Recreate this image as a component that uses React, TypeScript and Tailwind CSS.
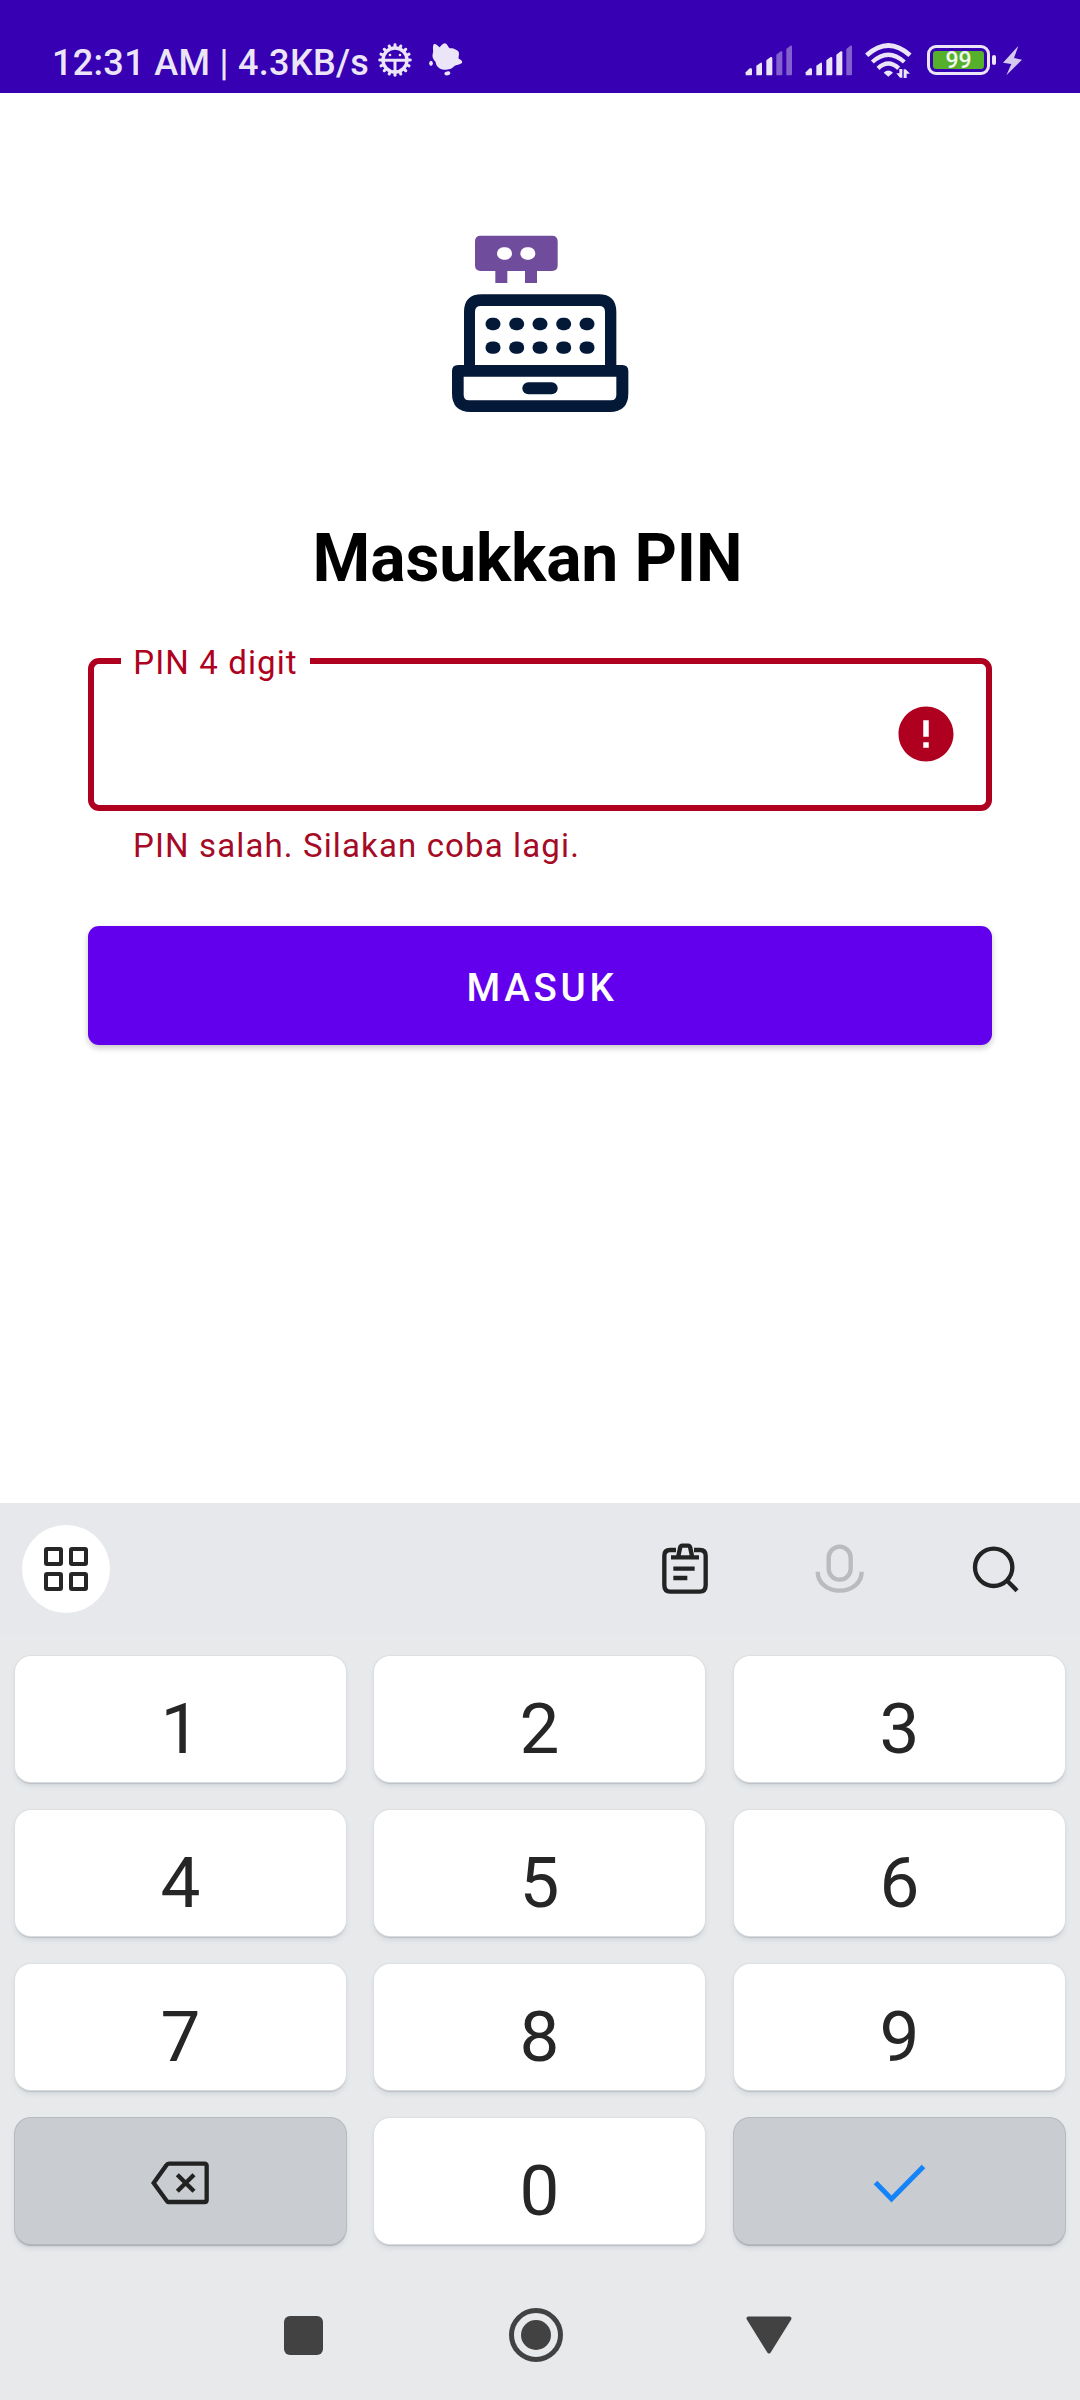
import type { ReactNode } from 'react';

function GearIcon() {
  const teeth = Array.from({ length: 16 }, (_, i) => i * 22.5);
  return (
    <svg className="block h-[36px] w-[36px] shrink-0" viewBox="-54 -54 108 108" fill="none">
      {teeth.map((a) => (
        <rect key={a} x="-4.5" y="-50" width="9" height="14" rx="4" fill="#ebe5f7" transform={`rotate(${a})`} />
      ))}
      <circle r="36" stroke="#ebe5f7" strokeWidth="10" />
      <path d="M-35 1H35M0 1V36" stroke="#ebe5f7" strokeWidth="9" />
      <circle cx="-15" cy="-15" r="4" fill="#ebe5f7" />
      <circle cx="15" cy="-15" r="4" fill="#ebe5f7" />
    </svg>
  );
}

function SplashIcon() {
  return (
    <svg className="block h-[36px] w-[36px] shrink-0" viewBox="0 0 108 108" fill="#ebe5f7">
      <path d="M14 4C18 0 25 6 32 13C36 9 41 1 47 1C54 1 56 10 62 16C72 14 85 21 89 26C92 35 87 42 89 47C95 49 102 54 99 60C92 65 82 66 76 69C69 78 60 80 46 80C31 79 21 70 20 57C12 49 9 42 11 33C15 25 9 14 14 4Z" />
      <ellipse cx="6" cy="61" rx="5.5" ry="8" />
      <ellipse cx="55" cy="91" rx="9" ry="6" transform="rotate(-12 55 91)" />
    </svg>
  );
}

function SignalIcon({ strong }: { strong: number }) {
  const bars = ['M2 91V82L14 70H18Q21 70 21 74V88Q21 91 18 91Z', 'M34 91V62L47 53Q51 52 51 56V88Q51 91 48 91Z', 'M64 91V46L77 36Q82 35 82 39V88Q82 91 79 91Z', 'M94 91V29L107 19Q112 18 112 22V88Q112 91 109 91Z', 'M124 91V12L136 2Q141 1 141 5V88Q141 91 138 91Z'];
  return (
    <svg className="block h-[31px] w-[48px] shrink-0" viewBox="0 0 144 93" fill="#ebe5f7">
      {bars.map((d, i) => (
        <path key={d} d={d} opacity={i < strong ? 1 : 0.42} />
      ))}
    </svg>
  );
}

function WifiIcon() {
  return (
    <svg className="block h-[36px] w-[47px] shrink-0" viewBox="0 0 141 108" fill="none" stroke="#ebe5f7">
      <path d="M5 37Q70 -22 135 37" strokeWidth="14" />
      <path d="M22 57Q70 13 118 57" strokeWidth="13" />
      <path d="M39 76Q70 47 101 76" strokeWidth="13" />
      <path d="M56 89Q70 76 84 89L70 101Z" fill="#ebe5f7" stroke="none" />
      <path d="M112 78V104H105L94 91H103V78ZM116 105V79H122L135 92H125V105Z" fill="#ebe5f7" stroke="none" />
    </svg>
  );
}

function StatusBar() {
  return (
    <header className="flex h-[93px] items-start bg-[#3700b3] text-[#ebe5f7]">
      <div className="ml-[52px] mt-[42px] flex w-[326px] items-center">
        <span className="whitespace-nowrap text-[36px] font-medium leading-[42px] tracking-[0.32px]">12:31 AM | 4.3KB/s</span>
      </div>
      <div className="-ml-px mt-[42px]"><GearIcon /></div>
      <div className="ml-[16px] mt-[43px]"><SplashIcon /></div>
      <div className="ml-auto mr-[57px] flex items-start">
        <div className="mt-[45px]"><SignalIcon strong={3} /></div>
        <div className="ml-[12px] mt-[45px]"><SignalIcon strong={4} /></div>
        <div className="ml-[12px] mt-[43px]"><WifiIcon /></div>
        <div className="ml-[15px] mt-[45px] flex items-center">
          <div className="flex h-[30px] w-[63px] rounded-[9px] border-[3px] border-[#ebe5f7] p-[3px]">
            <div className="flex flex-1 items-center justify-center rounded-[3px] bg-[#55b02b] pt-[2px]">
              <span className="text-[23px] font-medium leading-[18px] text-[#f3f8f0]">99</span>
            </div>
          </div>
          <div className="ml-[2px] h-[10px] w-[4px] rounded-[2px] bg-[#ebe5f7]" />
        </div>
        <svg className="ml-[7px] mt-[46px] block h-[30px] w-[20px]" viewBox="0 0 60 90" fill="#d5c9ef">
          <path d="M46 0L0 50L25 54L10 88L57 41L33 36Z" />
        </svg>
      </div>
    </header>
  );
}

function Logo() {
  const columns = [189, 260, 330, 401, 471];
  return (
    <svg className="block h-[210px] w-[220px]" viewBox="0 0 660 630">
      <path d="M152 62H366Q383 62 383 79V151Q383 168 366 168H321V204H285V168H232V204H196V168H152Q135 168 135 151V79Q135 62 152 62Z" fill="#704c9d" />
      <rect x="201" y="97" width="45" height="37" rx="18.5" fill="#fff" />
      <rect x="271" y="97" width="45" height="37" rx="18.5" fill="#fff" />
      <path d="M102 460V291Q102 238 155 238H506Q559 238 559 291V460H525V290Q525 273 508 273H152Q135 273 135 290V460Z" fill="#041838" />
      <path d="M84 450H577Q595 450 595 468V535Q595 591 539 591H122Q66 591 66 535V468Q66 450 84 450ZM101 485V540Q101 556 117 556H543Q559 556 559 540V485Z" fill="#041838" fillRule="evenodd" />
      {[327, 398].map((y) => columns.map((x) => (
        <rect key={`${x}-${y}`} x={x - 22.5} y={y - 18.5} width="45" height="37" rx="18.5" fill="#041838" />
      )))}
      <rect x="277" y="502" width="106" height="36" rx="18" fill="#041838" />
    </svg>
  );
}

function PinField() {
  return (
    <div className="w-[904px]">
      <div className="relative flex h-[153px] items-center justify-end rounded-[11px] border-[6px] border-[#b00020] pb-[2px] pr-[27px]">
        <span className="absolute -top-[19px] left-[27px] flex h-[36px] w-[189px] items-center justify-center whitespace-nowrap bg-white text-[33px] leading-[40px] tracking-[1.1px] text-[#b00020]">
          PIN 4 digit
        </span>
        <svg className="block h-[66px] w-[66px]" viewBox="0 0 24 24" fill="#b00020">
          <path d="M12 2C6.480 2 2 6.480 2 12s4.480 10 10 10 10-4.480 10-10S17.520 2 12 2zM13 17h-2v-2h2v2zM13 13h-2V7h2v6z" />
        </svg>
      </div>
      <p className="ml-[45px] mt-[15px] h-[40px] whitespace-nowrap text-[33px] leading-[40px] tracking-[1.13px] text-[#a50a26]">
        PIN salah. Silakan coba lagi.
      </p>
    </div>
  );
}

function Toolbar() {
  return (
    <div className="flex h-[132px] items-center bg-[#e6e8ec] pl-[22px] pr-[53px]">
      <button className="flex h-[88px] w-[88px] items-center justify-center rounded-full bg-white">
        <svg className="block h-[44px] w-[44px]" viewBox="0 0 44 44" fill="none" stroke="#262626" strokeWidth="4">
          <rect x="2" y="2" width="15" height="15" rx="1" />
          <rect x="27" y="2" width="15" height="15" rx="1" />
          <rect x="2" y="27" width="15" height="15" rx="1" />
          <rect x="27" y="27" width="15" height="15" rx="1" />
        </svg>
      </button>
      <div className="mb-[6px] ml-auto flex gap-[89px]">
        <svg className="block h-[66px] w-[66px]" viewBox="0 0 198 198" fill="none" stroke="#222423" strokeWidth="13">
          <path d="M72 53H54Q37 53 37 70V159Q37 178 55 178H143Q161 178 161 159V70Q161 53 144 53H126" transform="translate(3 -2)" />
          <path d="M57 74H141M79 70L84 47Q85 39 91 39H108Q114 39 115 47L120 70M64 108H128M64 136H106" transform="translate(3 -1)" />
        </svg>
        <svg className="block h-[66px] w-[66px]" viewBox="0 0 198 198" fill="none" stroke="#babbbd" strokeWidth="13">
          <rect x="68" y="41" width="66" height="99" rx="33" />
          <path d="M35 116C35 148 62 173 101 173S167 148 167 116" />
        </svg>
        <svg className="block h-[66px] w-[66px]" viewBox="0 0 198 198" fill="none" stroke="#222423" strokeWidth="13">
          <circle cx="98" cy="103" r="56" />
          <path d="M137 142L168 173" />
        </svg>
      </div>
    </div>
  );
}

function Key({ children, muted = false }: { children: ReactNode; muted?: boolean }) {
  return (
    <button
      className={
        muted
          ? 'flex h-[126px] w-[331px] items-center justify-center rounded-[16px] bg-[#c9ccd1] shadow-[0_0_0_1px_#b6b9be,0_2px_1px_#a9acb1,0_4px_5px_#cfd3d8]'
          : 'flex h-[126px] w-[331px] items-center justify-center rounded-[16px] bg-white pt-[20px] text-[71px] leading-[84px] text-[#262626] shadow-[0_0_1px_1px_#dcdee0,0_2px_1px_#b9bcc1,0_4px_5px_#d3d7dc]'
      }
    >
      {children}
    </button>
  );
}

function Keypad() {
  return (
    <div className="grid grid-cols-[359px_360px_331px] gap-y-[28px] pl-[15px] pt-[21px]">
      {['1', '2', '3', '4', '5', '6', '7', '8', '9'].map((n) => (
        <Key key={n}>{n}</Key>
      ))}
      <Key muted>
        <svg className="block h-[48px] w-[60px]" viewBox="0 0 180 144" fill="none" stroke="#222" strokeWidth="13">
          <path d="M54 14H160Q167 14 167 21V122Q167 129 160 129H54Q49 129 46 124L8 72L46 19Q49 14 54 14Z" transform="translate(0 6)" />
          <path d="M77 47L127 97M127 47L77 97" transform="translate(2 6)" />
        </svg>
      </Key>
      <Key>0</Key>
      <Key muted>
        <svg className="block h-[44px] w-[56px]" viewBox="0 0 56 44" fill="none" stroke="#1484f8" strokeWidth="5">
          <path d="M3.500 23.500L19.500 40L51.500 7.500" />
        </svg>
      </Key>
    </div>
  );
}

function NavBar() {
  return (
    <nav className="mt-auto flex h-[130px] items-center">
      <div className="ml-[284px] h-[39px] w-[39px] rounded-[6px] bg-[#424242]" />
      <div className="ml-[186px] flex h-[54px] w-[54px] items-center justify-center rounded-full border-[5px] border-[#424242]">
        <div className="h-[30px] w-[30px] rounded-full bg-[#424242]" />
      </div>
      <svg className="ml-[183px] block h-[38px] w-[46px]" viewBox="0 0 46 38" fill="#424242" stroke="#424242" strokeWidth="4" strokeLinejoin="round">
        <path d="M2.500 2.500H43.500L23 35.500Z" />
      </svg>
    </nav>
  );
}

export default function App() {
  return (
    <div className="flex h-[2400px] w-[1080px] flex-col overflow-hidden bg-white font-['Roboto',sans-serif]">
      <StatusBar />
      <main className="flex flex-1 flex-col items-center pt-[122px]">
        <Logo />
        <h1 className="mr-[25px] mt-[95px] whitespace-nowrap text-[66px] font-bold leading-[78px] tracking-[-0.15px] text-black">Masukkan PIN</h1>
        <div className="mt-[60px]"><PinField /></div>
        <button className="mt-[60px] flex h-[119px] w-[904px] items-center justify-center rounded-[11px] bg-[#6200ee] pl-[4px] pt-[4px] text-[38.5px] font-medium tracking-[3.700px] text-white shadow-[0_3px_6px_rgba(0,0,0,0.22)]">
          MASUK
        </button>
      </main>
      <section className="flex h-[897px] flex-col bg-[#e7e9eb]">
        <Toolbar />
        <Keypad />
        <NavBar />
      </section>
    </div>
  );
}
